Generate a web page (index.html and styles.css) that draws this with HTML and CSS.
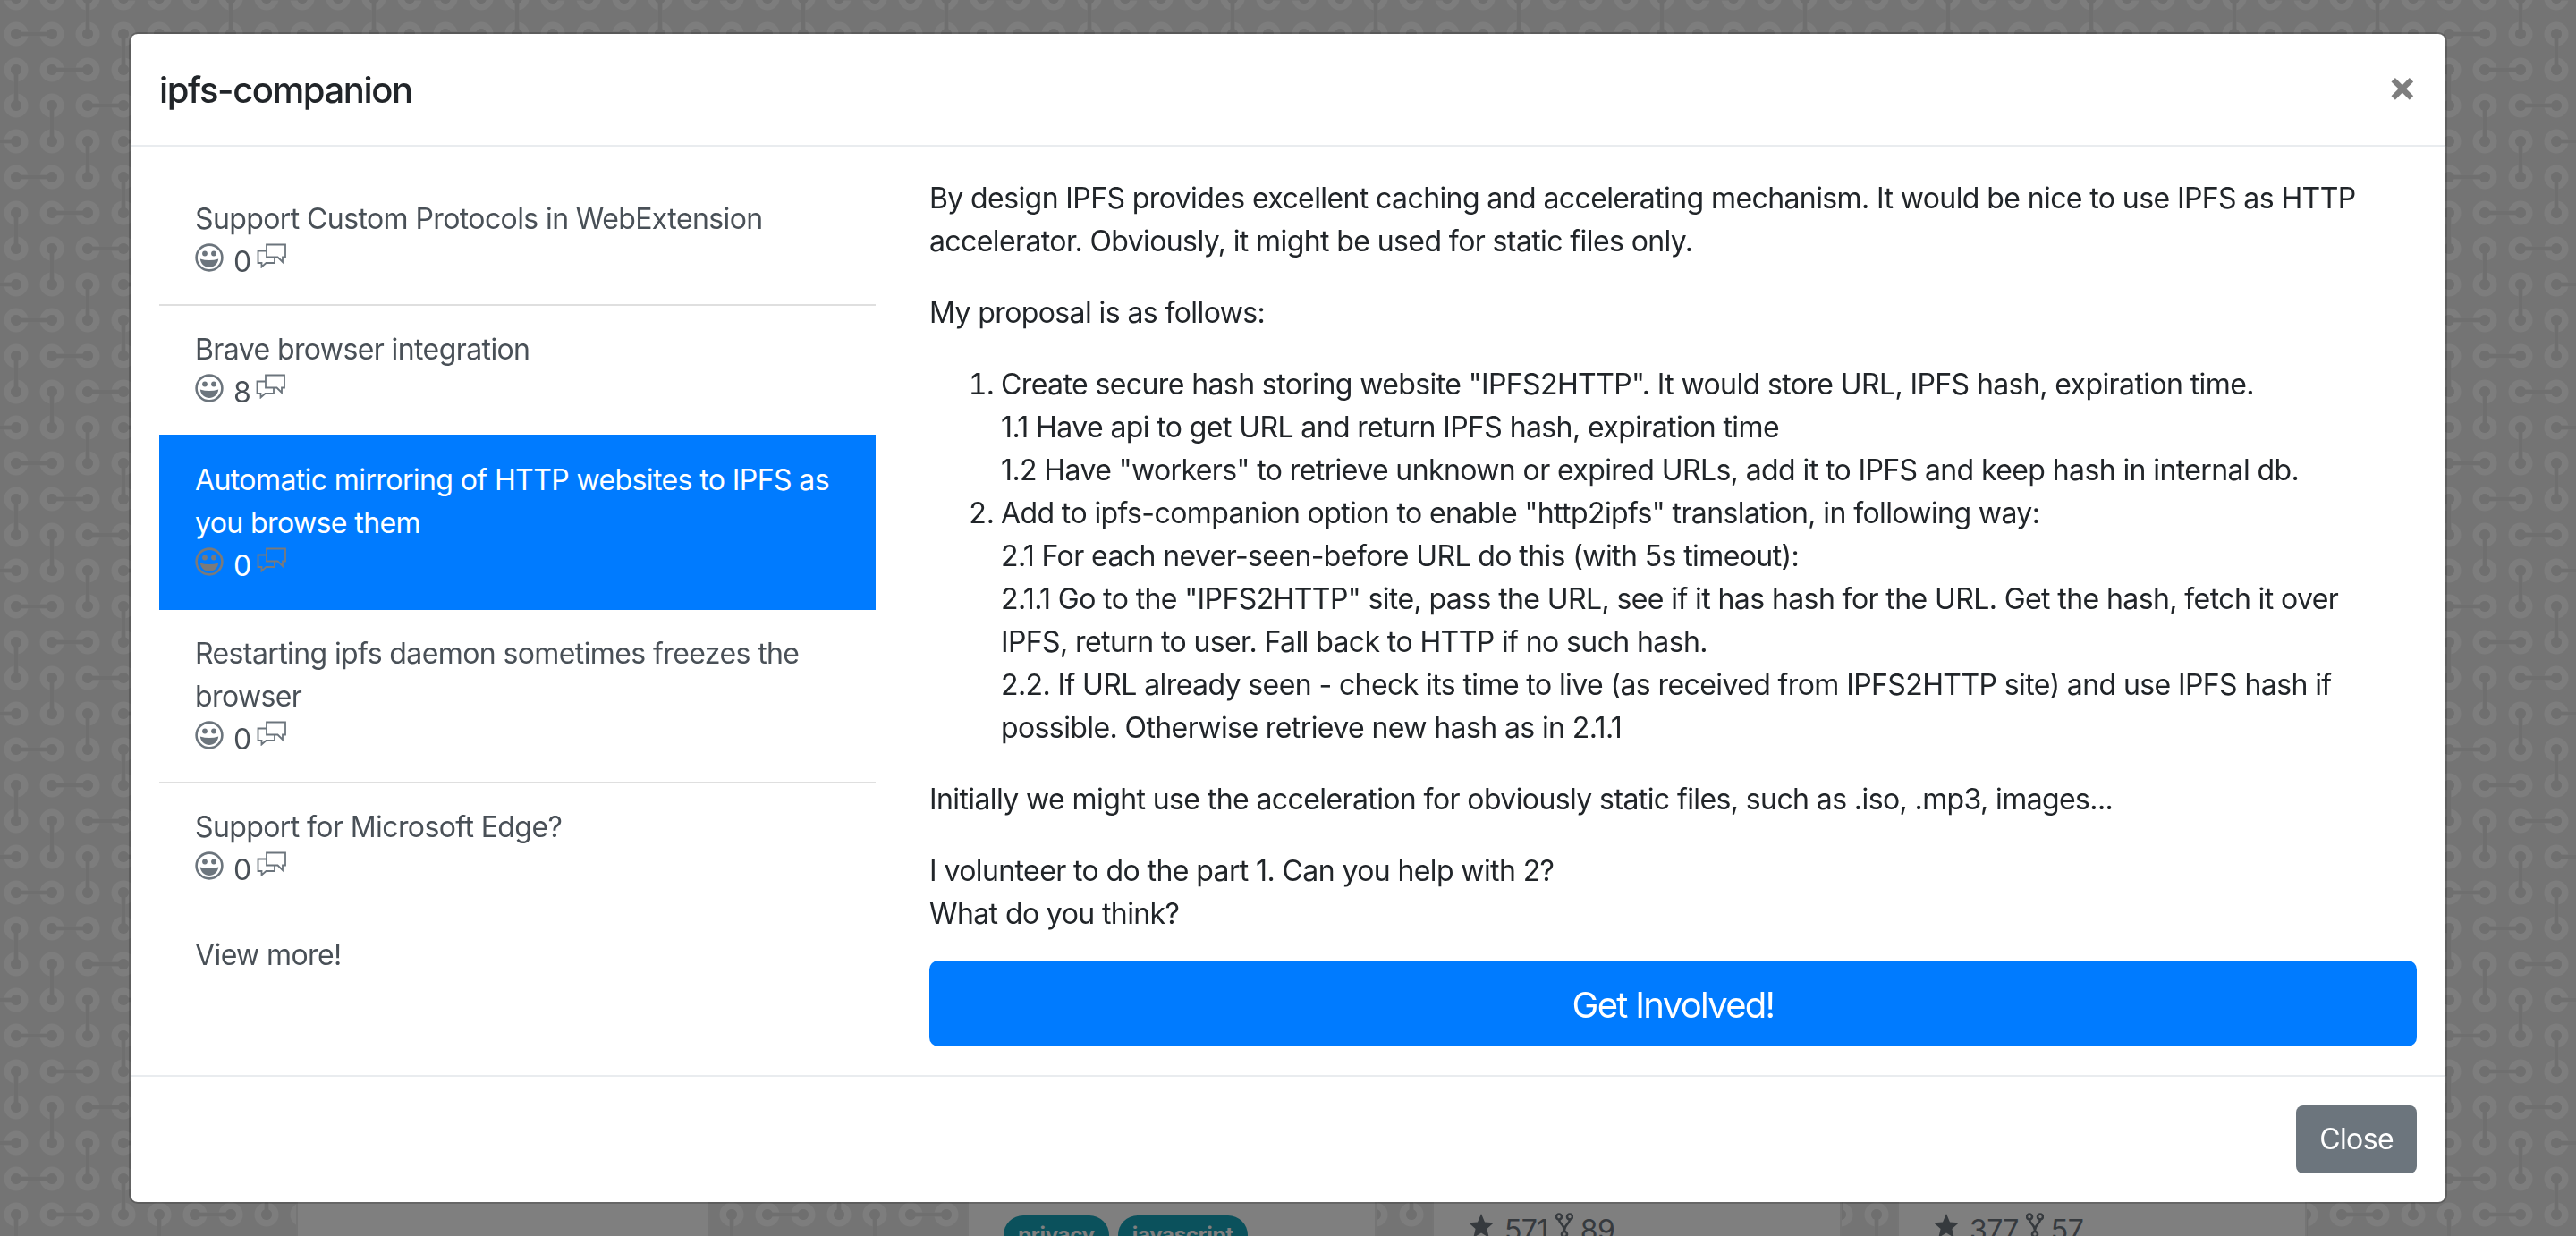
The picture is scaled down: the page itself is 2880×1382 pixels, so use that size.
FILE: index.html
```html
<!DOCTYPE html>
<html lang="en">
<head>
<meta charset="utf-8">
<title>ipfs-companion</title>
<link rel="stylesheet" href="styles.css">
</head>
<body>
<svg class="pattern" width="2880" height="1382" aria-hidden="true">
  <defs>
    <pattern id="tile" x="-2" y="18" width="160" height="160" patternUnits="userSpaceOnUse">
      <g class="rings">
        <circle cx="20" cy="20" r="9.75"/><circle cx="60" cy="20" r="9.75"/><circle cx="100" cy="20" r="9.75"/><circle cx="140" cy="20" r="9.75"/>
        <circle cx="20" cy="60" r="9.75"/><circle cx="60" cy="60" r="9.75"/><circle cx="100" cy="60" r="9.75"/><circle cx="140" cy="60" r="9.75"/>
        <circle cx="20" cy="100" r="9.75"/><circle cx="60" cy="100" r="9.75"/><circle cx="100" cy="100" r="9.75"/><circle cx="140" cy="100" r="9.75"/>
        <circle cx="20" cy="140" r="9.75"/><circle cx="60" cy="140" r="9.75"/><circle cx="100" cy="140" r="9.75"/><circle cx="140" cy="140" r="9.75"/>
      </g>
      <path class="cut" d="M20 20H60M140 20V60M20 60V100M60 60H100M60 100V140M100 100H140M140 140H180M-20 140H20M100 140V180M100 -20V20"/>
      <path class="link" d="M20 20H60M140 20V60M20 60V100M60 60H100M60 100V140M100 100H140M140 140H180M-20 140H20M100 140V180M100 -20V20"/>
      <g class="dots">
        <circle cx="20" cy="20" r="6"/><circle cx="60" cy="20" r="6"/><circle cx="100" cy="20" r="6"/><circle cx="140" cy="20" r="6"/>
        <circle cx="20" cy="60" r="6"/><circle cx="60" cy="60" r="6"/><circle cx="100" cy="60" r="6"/><circle cx="140" cy="60" r="6"/>
        <circle cx="20" cy="100" r="6"/><circle cx="60" cy="100" r="6"/><circle cx="100" cy="100" r="6"/><circle cx="140" cy="100" r="6"/>
        <circle cx="20" cy="140" r="6"/><circle cx="60" cy="140" r="6"/><circle cx="100" cy="140" r="6"/><circle cx="140" cy="140" r="6"/>
      </g>
    </pattern>
    <symbol id="smile" viewBox="0 0 32 32">
      <circle cx="16" cy="16" r="14.4" fill="none" stroke="currentColor" stroke-width="2.6"/>
      <circle cx="11" cy="11.5" r="2.9" fill="currentColor"/>
      <circle cx="21" cy="11.5" r="2.9" fill="currentColor"/>
      <path fill="currentColor" d="M5.8 17.5Q16 20.5 26.2 17.5C25.4 23.5 21 27 16 27S6.6 23.5 5.8 17.5Z"/>
    </symbol>
    <symbol id="talk" viewBox="0 0 34 28">
      <path fill="none" stroke="currentColor" stroke-width="1.8" d="M11 15.5V1.5H32V15.5H29V21L23.5 15.5ZM11 8.5H1.5V22H5.500V26.5L10.5 22H20V15.5"/>
    </symbol>
    <symbol id="star" viewBox="0 0 28 27">
      <path fill="currentColor" d="M14 0l4 9.4 10 .9-7.600 6.600 2.300 10L14 21.600 5.300 26.900l2.300-10L0 10.300l10-.9z"/>
    </symbol>
    <symbol id="fork" viewBox="0 0 20 28">
      <g fill="none" stroke="currentColor" stroke-width="2.600"><circle cx="4" cy="4.500" r="3"/><circle cx="16" cy="4.500" r="3"/><circle cx="10" cy="24" r="3"/><path d="M4 7.500C4 13 10 12 10 21M16 7.500C16 13 10 12 10 21"/></g>
    </symbol>
  </defs>
  <rect width="2880" height="1382" fill="url(#tile)"/>
</svg>

<main class="page">
  <div class="cards">
    <div class="card"></div>
    <div class="card card-far">
      <span class="badge">privacy</span><span class="badge">javascript</span>
    </div>
    <div class="card stats">
      <svg class="star"><use href="#star"/></svg><span>571</span>
      <svg class="fork"><use href="#fork"/></svg><span>89</span>
    </div>
    <div class="card stats">
      <svg class="star"><use href="#star"/></svg><span>377</span>
      <svg class="fork"><use href="#fork"/></svg><span>57</span>
    </div>
  </div>
</main>

<div class="backdrop">
  <section class="modal">
    <header class="modal-header">
      <h5 class="modal-title">ipfs-companion</h5>
      <span class="close">×</span>
    </header>
    <div class="modal-body">
      <div class="issues">
        <a class="issue">
          <span class="issue-title">Support Custom Protocols in WebExtension</span>
          <span class="meta"><svg class="ico-smile"><use href="#smile"/></svg><span>0</span><svg class="ico-talk"><use href="#talk"/></svg></span>
        </a>
        <a class="issue">
          <span class="issue-title">Brave browser integration</span>
          <span class="meta"><svg class="ico-smile"><use href="#smile"/></svg><span>8</span><svg class="ico-talk"><use href="#talk"/></svg></span>
        </a>
        <a class="issue active">
          <span class="issue-title">Automatic mirroring of HTTP websites to IPFS as you browse them</span>
          <span class="meta"><svg class="ico-smile"><use href="#smile"/></svg><span>0</span><svg class="ico-talk"><use href="#talk"/></svg></span>
        </a>
        <a class="issue">
          <span class="issue-title">Restarting ipfs daemon sometimes freezes the browser</span>
          <span class="meta"><svg class="ico-smile"><use href="#smile"/></svg><span>0</span><svg class="ico-talk"><use href="#talk"/></svg></span>
        </a>
        <a class="issue last">
          <span class="issue-title">Support for Microsoft Edge?</span>
          <span class="meta"><svg class="ico-smile"><use href="#smile"/></svg><span>0</span><svg class="ico-talk"><use href="#talk"/></svg></span>
        </a>
        <a class="view-more">View more!</a>
      </div>
      <div class="detail">
        <p>By design IPFS provides excellent caching and accelerating mechanism. It would be nice to use IPFS as HTTP accelerator. Obviously, it might be used for static files only.</p>
        <p>My proposal is as follows:</p>
        <ol>
          <li>Create secure hash storing website "IPFS2HTTP". It would store URL, IPFS hash, expiration time.<br>1.1 Have api to get URL and return IPFS hash, expiration time<br>1.2 Have "workers" to retrieve unknown or expired URLs, add it to IPFS and keep hash in internal db.</li>
          <li>Add to ipfs-companion option to enable "http2ipfs" translation, in following way:<br>2.1 For each never-seen-before URL do this (with 5s timeout):<br>2.1.1 Go to the "IPFS2HTTP" site, pass the URL, see if it has hash for the URL. Get the hash, fetch it over<br>IPFS, return to user. Fall back to HTTP if no such hash.<br>2.2. If URL already seen - check its time to live (as received from IPFS2HTTP site) and use IPFS hash if possible. Otherwise retrieve new hash as in 2.1.1</li>
        </ol>
        <p>Initially we might use the acceleration for obviously static files, such as .iso, .mp3, images...</p>
        <p>I volunteer to do the part 1. Can you help with 2?<br>What do you think?</p>
        <a class="btn-involved">Get Involved!</a>
      </div>
    </div>
    <footer class="modal-footer">
      <a class="btn-close">Close</a>
    </footer>
  </section>
</div>
</body>
</html>
```

FILE: styles.css
```css
* { box-sizing: border-box; }
html, body { margin: 0; height: 100%; overflow: hidden; }
body {
  font-family: Inter, "Liberation Sans", sans-serif;
  font-size: 32px;
  line-height: 48px;
  color: #212529;
  letter-spacing: -0.6px;
  background: #e9e9e9;
}

.pattern { position: absolute; left: 0; top: 0; filter: blur(0.6px); }
.rings circle { fill: none; stroke: #fafafa; stroke-width: 7.5; }
.cut { fill: none; stroke: #e9e9e9; stroke-width: 5; }
.link { fill: none; stroke: #dedede; stroke-width: 4; }
.dots circle { fill: #dedede; }

.page { position: relative; height: 100vh; padding-top: 1340px; overflow: hidden; }
.cards { display: flex; gap: 62px; padding-left: 331px; }
.card { width: 458px; height: 120px; background: #fff; border: 2px solid rgba(0, 0, 0, .08); padding: 17px 39px; color: #6c757d; }
.card:first-child { width: 463px; }
.card-far { margin-left: 225px; display: flex; gap: 10px; align-items: flex-start; }
.badge { background: #17a2b8; color: #fff; font-size: 24px; font-weight: 700; line-height: 36px; padding: 4px 16px; border-radius: 24px; height: 44px; letter-spacing: -0.3px; }
.stats { display: flex; align-items: flex-start; padding-left: 39px; line-height: 48px; padding-top: 10px; }
.star { width: 28px; height: 27px; margin: 5px 12px 0 0; color: #6c757d; flex: none; }
.fork { width: 20px; height: 28px; margin: 4px 8px 0; flex: none; color: #6c757d; }

.backdrop { position: fixed; inset: 0; background: rgba(0, 0, 0, .5); padding: 36px 144px 0; }
.modal { background: #fff; border: 2px solid rgba(0, 0, 0, .2); background-clip: padding-box; border-radius: 10px; }

.modal-header { display: flex; justify-content: space-between; align-items: flex-start; padding: 32px; border-bottom: 2px solid #e9ecef; }
.modal-title { margin: 0; padding-top: 2px; font-size: 40px; line-height: 58px; font-weight: 500; letter-spacing: -1.4px; }
.close { font-size: 48px; font-weight: 700; line-height: 48px; color: #000; opacity: .5; margin-top: 2px; letter-spacing: 0; }

.modal-body { display: grid; grid-template-columns: 801px 1663px; column-gap: 60px; padding: 32px; }

.issues { display: flex; flex-direction: column; }
.issue { position: relative; display: block; margin-top: -2px; padding: 25px 40px 23px; border-top: 2px solid #dfdfdf; border-bottom: 2px solid #dfdfdf; color: #495057; }
.issue:first-child { margin-top: 0; border-top: 0; }
.issue.active { z-index: 1; background: #007bff; border-color: #007bff; color: #fff; }
.issue.last { border-bottom: 0; }
.issue-title { display: block; }
.meta { display: flex; align-items: flex-start; }
.meta svg { color: #6c757d; margin-top: 3px; flex: none; }
.active .meta svg { color: #7a7a7a; }
.ico-smile { width: 32px; height: 32px; margin-right: 11px; }
.ico-talk { width: 34px; height: 28px; margin-left: 6px; }
.view-more { display: block; padding: 24px 40px; color: #495057; }

.detail { padding-top: 2px; }
.detail p { margin: 0 0 32px; }
.detail ol { margin: 0 0 32px; padding-left: 80px; }
.btn-involved { display: block; margin-top: -4px; height: 96px; background: #007bff; color: #fff; font-size: 40px; line-height: 100px; letter-spacing: -1.7px; text-align: center; border-radius: 10px; }

.modal-footer { display: flex; justify-content: flex-end; padding: 32px; border-top: 2px solid #e9ecef; }
.btn-close { display: block; background: #6c757d; color: #fff; padding: 14px 26px; border-radius: 8px; }
```
